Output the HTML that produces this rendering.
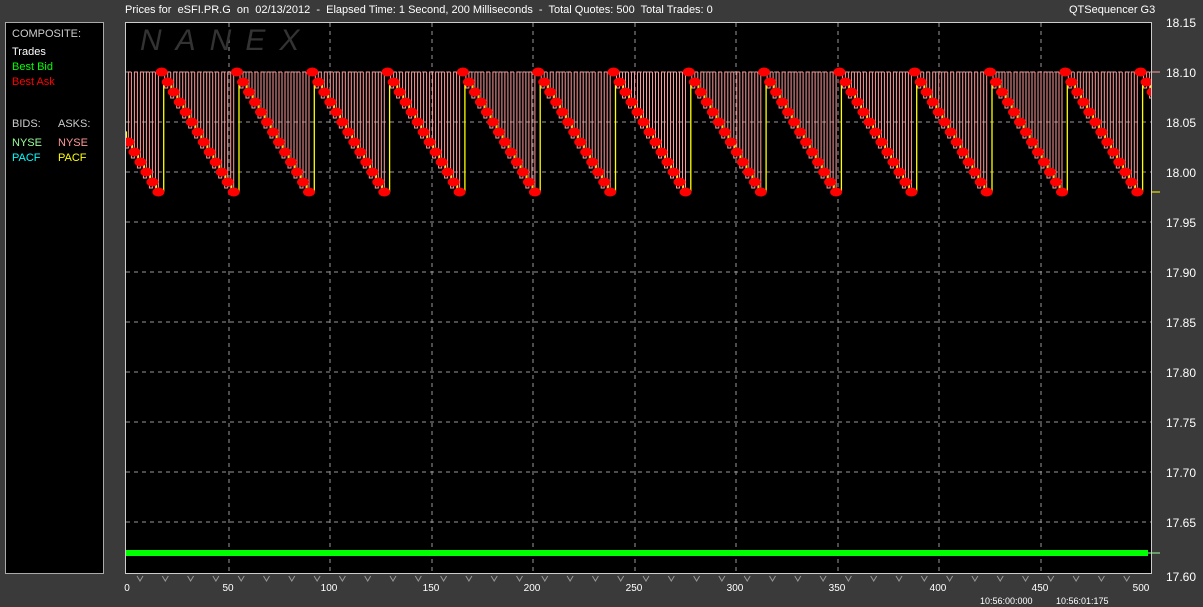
<!DOCTYPE html><html><head><style>
body{margin:0;width:1203px;height:607px;background:#3a3a3a;position:relative;overflow:hidden;font-family:"Liberation Sans",sans-serif;color:#fff;font-size:11px}
.t{position:absolute;white-space:pre}
#lp{position:absolute;left:5px;top:22px;width:99px;height:552px;background:#000;border:1px solid #aaa;box-sizing:border-box}
#plot{position:absolute;left:125px;top:22px;width:1027px;height:552px;background:#000;border:1px solid #ccc;box-sizing:border-box}
.y{position:absolute;left:1166px;font-size:12px;color:#fff}
.x{position:absolute;top:583px;font-size:10px;transform:translateX(-50%)}
</style></head><body>
<div class="t" style="left:125px;top:4px">Prices for  eSFI.PR.G  on  02/13/2012  -  Elapsed Time: 1 Second, 200 Milliseconds  -  Total Quotes: 500  Total Trades: 0</div>
<div class="t" style="left:1069px;top:4px">QTSequencer G3</div>
<div id="lp">
<div class="t" style="left:6px;top:5px;color:#ccc">COMPOSITE:</div>
<div class="t" style="left:6px;top:23px">Trades</div>
<div class="t" style="left:6px;top:38px;color:#0f0">Best Bid</div>
<div class="t" style="left:6px;top:53px;color:#f00">Best Ask</div>
<div class="t" style="left:6px;top:95px;color:#ccc">BIDS:</div>
<div class="t" style="left:52px;top:95px;color:#ccc">ASKS:</div>
<div class="t" style="left:6px;top:114px;color:#9f9">NYSE</div>
<div class="t" style="left:52px;top:114px;color:#f99">NYSE</div>
<div class="t" style="left:6px;top:129px;color:#0ff">PACF</div>
<div class="t" style="left:52px;top:129px;color:#ff0">PACF</div>
</div>
<div id="plot"></div>
<svg id="s" width="1203" height="607" style="position:absolute;left:0;top:0"></svg>
<div class="t" style="left:140px;top:24px;font-size:30px;font-style:italic;color:#333;letter-spacing:14px">NANEX</div>
<div class="y" style="top:16px">18.15</div><div class="y" style="top:66px">18.10</div><div class="y" style="top:116px">18.05</div><div class="y" style="top:166px">18.00</div><div class="y" style="top:216px">17.95</div><div class="y" style="top:266px">17.90</div><div class="y" style="top:316px">17.85</div><div class="y" style="top:366px">17.80</div><div class="y" style="top:416px">17.75</div><div class="y" style="top:466px">17.70</div><div class="y" style="top:516px">17.65</div><div class="y" style="top:570px">17.60</div>
<div class="x" style="left:127px">0</div><div class="x" style="left:228px">50</div><div class="x" style="left:329px">100</div><div class="x" style="left:431px">150</div><div class="x" style="left:532px">200</div><div class="x" style="left:634px">250</div><div class="x" style="left:735px">300</div><div class="x" style="left:837px">350</div><div class="x" style="left:938px">400</div><div class="x" style="left:1040px">450</div><div class="x" style="left:1141px">500</div>
<div class="t" style="left:980px;top:596px;font-size:9px">10:56:00:000</div>
<div class="t" style="left:1056px;top:596px;font-size:9px">10:56:01:175</div>
<script>
var s=document.getElementById('s'),h='<defs><clipPath id="c"><rect x="126" y="23" width="1025" height="550"/></clipPath></defs>';
for(var i=1;i<11;i++){h+='<line x1="126" x2="1151" y1="'+(22+50*i)+'" y2="'+(22+50*i)+'" stroke="#999" stroke-dasharray="4,4"/>';}
for(var k=1;k<10;k++){var x=Math.round(127+101.5*k);h+='<line x1="'+x+'" x2="'+x+'" y1="23" y2="573" stroke="#999" stroke-dasharray="4,4"/>';}
var P=75.3,st=237-P,pink='',yel='',dots='';
for(var c=-1;c<14;c++){var x0=st+c*P;
 for(var j=0;j<12;j++){var x=x0+3+j*6;var lev=Math.min(72+(j+1)*10+6,192);
  pink+='M'+x+' 72V'+lev+'H'+(x+3)+'V72H'+(x+6)+' ';}
 for(var q=0;q<13;q++){var x=x0+q*6,y=72+q*10;if(x<124||x>1156)continue;dots+='<ellipse cx="'+x+'" cy="'+y+'" rx="6" ry="4.5" fill="#f00"/>';}
 yel+='M'+(x0+2)+' 192V82';for(var q=1;q<12;q++){var x=x0+q*6+4;yel+='H'+x+'V'+(82+q*10);}yel+='H'+(x0+P+2)+' ';
}
h+='<g clip-path="url(#c)"><path d="'+pink+'" stroke="#f99" fill="none" stroke-width="1"/>';
h+='<path d="'+yel+'" stroke="#ff0" fill="none" stroke-width="1.3"/>';
h+=dots+'</g>';
h+='<rect x="126" y="550" width="1022" height="6" fill="#0f0"/><line x1="1148" x2="1160" y1="553" y2="553" stroke="#9f9"/><line x1="1151" x2="1160" y1="192" y2="192" stroke="#ff0"/><line x1="1151" x2="1160" y1="72" y2="72" stroke="#f99"/>';
for(var k=0;k<40;k++){var x=140+k*25.3;h+='<path d="M'+(x-3)+' 576L'+x+' 581L'+(x+3)+' 576" stroke="#999" fill="none"/>';}
s.innerHTML=h;
</script>
</body></html>
